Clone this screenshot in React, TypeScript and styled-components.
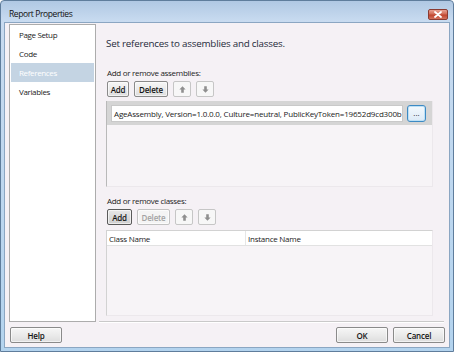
import React from "react";
import styled, { createGlobalStyle, css } from "styled-components";

const GlobalStyle = createGlobalStyle`
  html, body { margin: 0; padding: 0; width: 454px; height: 352px; overflow: hidden; }
  body { font-family: "Open Sans", "Noto Sans", sans-serif; color: #1b1b1b; }
  * { box-sizing: border-box; }
`;

const Window = styled.div`
  width: 454px;
  height: 352px;
  display: flex;
  flex-direction: column;
  border: 1px solid #5f7d9c;
  border-radius: 4px 4px 0 0;
  background: linear-gradient(180deg, #b0c8e3 0px, #c8dbf0 20px, #b3d3ee 100%);
  padding: 0 3px 3px 3px;
`;

const TitleBar = styled.div`
  height: 21px;
  padding: 3px 2px 0 5px;
  display: flex;
  align-items: center;
  justify-content: space-between;
`;

const Title = styled.span`
  font-size: 8.5px;
  color: #111;
  letter-spacing: -0.4px;
`;

const CloseButton = styled.div`
  width: 20px;
  height: 11px;
  margin-top: 2px;
  border: 1px solid #8a3b32;
  border-radius: 2px;
  background: linear-gradient(180deg, #e8a293 0%, #d16a55 45%, #c0442e 55%, #d2725d 100%);
  display: flex;
  align-items: center;
  justify-content: center;
`;

const Client = styled.div`
  flex: 1;
  background: #f5f1f5;
  border: 1px solid #8ba6c2;
  display: flex;
  flex-direction: column;
`;

const Body = styled.div`
  display: flex;
  padding: 1px 4px 0 4px;
`;

const Nav = styled.div`
  flex: 0 0 87px;
  width: 87px;
  height: 298px;
  background: #fff;
  border: 1px solid #acacac;
  display: flex;
  flex-direction: column;
  padding: 0 1px;
`;

const NavItem = styled.div<{ $selected?: boolean }>`
  height: 19px;
  display: flex;
  align-items: center;
  padding-left: 8px;
  font-size: 8px;
  letter-spacing: -0.35px;
  color: #1b1b1b;
  ${(p) =>
    p.$selected &&
    css`
      background: #c4d4e3;
      color: #fff;
    `}
`;

const MainCol = styled.div`
  flex: 1;
  min-width: 0;
  margin-left: 3px;
  display: flex;
  flex-direction: column;
`;

const Main = styled.div`
  flex: 1;
  padding: 12px 12px 0 7px;
  display: flex;
  flex-direction: column;
`;

const Heading = styled.div`
  font-size: 9.8px;
  letter-spacing: -0.22px;
  line-height: 16px;
  color: #1e2a3a;
  margin-bottom: 14px;
`;

const Label = styled.div<{ $top?: number }>`
  font-size: 8px;
  letter-spacing: -0.3px;
  line-height: 14px;
  padding-left: 1px;
  margin-top: ${(p) => p.$top ?? 0}px;
  color: #1b1b1b;
`;

const ButtonRow = styled.div`
  display: flex;
  gap: 5px;
  padding-left: 1px;
  margin-top: 1px;
`;

const Btn = styled.button<{ $w?: number; $disabled?: boolean; $strong?: boolean }>`
  width: ${(p) => p.$w ?? 22}px;
  height: 16px;
  padding: 0;
  font-family: inherit;
  font-size: 8px;
  letter-spacing: -0.2px;
  font-weight: 600;
  color: ${(p) => (p.$disabled ? "#a3a3a3" : "#151515")};
  border: 1px solid ${(p) => (p.$disabled ? "#c3c3c3" : p.$strong ? "#5a5a5a" : "#8a8a8a")};
  border-radius: 2px;
  background: ${(p) =>
    p.$disabled
      ? "#f4f4f4"
      : p.$strong
      ? "linear-gradient(180deg, #e8e8e8 0%, #dadada 50%, #cfcfcf 100%)"
      : "linear-gradient(180deg, #f6f6f6 0%, #ebebeb 50%, #dddddd 100%)"};
  display: flex;
  align-items: center;
  justify-content: center;
  box-shadow: inset 0 0 0 1px rgba(255, 255, 255, 0.6);
`;

const ArrowBtn = styled.div`
  width: 18px;
  height: 16px;
  border: 1px solid #c6c6c6;
  border-radius: 2px;
  background: #f7f7f7;
  display: flex;
  align-items: center;
  justify-content: center;
`;

const AssemblyList = styled.div`
  margin-top: 4px;
  height: 86px;
  border-left: 1px solid #b9b9b9;
  border-right: 1px solid #ece8ec;
  border-bottom: 1px solid #ece8ec;
  background: #f7f4f7;
  display: flex;
  flex-direction: column;
`;

const AssemblyRow = styled.div`
  height: 24px;
  background: #d5d5d5;
  display: flex;
  align-items: center;
  padding: 0 6px 0 4px;
  gap: 4px;
`;

const Field = styled.div`
  flex: 1;
  min-width: 0;
  height: 17px;
  background: #fff;
  border: 1px solid #c9c9c9;
  font-size: 8px;
  display: flex;
  align-items: center;
  padding-left: 2px;
  white-space: nowrap;
  overflow: hidden;
  letter-spacing: -0.18px;
`;

const BrowseBtn = styled.div`
  flex: 0 0 19px;
  height: 17px;
  border: 1px solid #3d8ac4;
  border-radius: 3px;
  background: linear-gradient(180deg, #f4f9fd 0%, #dceaf6 100%);
  box-shadow: inset 0 0 0 1px #bde0f6;
  font-size: 8px;
  display: flex;
  align-items: center;
  justify-content: center;
  padding-bottom: 2px;
`;

const Grid = styled.div`
  margin-top: 5px;
  height: 86px;
  border: 1px solid #d2d2d2;
  border-bottom-color: #ece8ec;
  border-right-color: #ece8ec;
  background: #f7f4f7;
  display: flex;
  flex-direction: column;
`;

const GridHeader = styled.div`
  height: 15px;
  background: #fff;
  border-bottom: 1px solid #e2e2e2;
  display: grid;
  grid-template-columns: 138px 1fr;
`;

const HeaderCell = styled.div`
  font-size: 8px;
  letter-spacing: -0.25px;
  padding-left: 2px;
  display: flex;
  align-items: center;
  & + & {
    border-left: 1px solid #e6e6e6;
  }
`;

const Separator = styled.div`
  height: 1px;
  background: #c9c9c9;
  margin: 0 1px 0 0;
  box-shadow: 0 1px 0 #fff;
`;

const Footer = styled.div`
  flex: 1;
  display: flex;
  align-items: flex-start;
  justify-content: space-between;
  padding: 5px 4px 0 5px;
`;

const FooterGroup = styled.div`
  display: flex;
  gap: 5px;
`;

const Arrow = ({ down }: { down?: boolean }) => (
  <svg width="7" height="7" viewBox="0 0 7 7" style={down ? { transform: "rotate(180deg)" } : undefined}>
    <path d="M3.5 0.3 L6.6 3.6 H4.8 V6.7 H2.2 V3.6 H0.4 Z" fill="#8f8f8f" />
  </svg>
);

const CloseX = () => (
  <svg width="8" height="7" viewBox="0 0 8 7">
    <path d="M1 1 L7 6 M7 1 L1 6" stroke="#fff" strokeWidth="1.8" strokeLinecap="round" />
  </svg>
);

const navItems = ["Page Setup", "Code", "References", "Variables"];

export default function App() {
  return (
    <>
      <GlobalStyle />
      <Window>
        <TitleBar>
          <Title>Report Properties</Title>
          <CloseButton>
            <CloseX />
          </CloseButton>
        </TitleBar>
        <Client>
          <Body>
            <Nav>
              {navItems.map((n) => (
                <NavItem key={n} $selected={n === "References"}>
                  {n}
                </NavItem>
              ))}
            </Nav>
            <MainCol>
              <Main>
                <Heading>Set references to assemblies and classes.</Heading>
                <Label>Add or remove assemblies:</Label>
                <ButtonRow>
                  <Btn $w={22}>Add</Btn>
                  <Btn $w={34}>Delete</Btn>
                  <ArrowBtn>
                    <Arrow />
                  </ArrowBtn>
                  <ArrowBtn>
                    <Arrow down />
                  </ArrowBtn>
                </ButtonRow>
                <AssemblyList>
                  <AssemblyRow>
                    <Field>AgeAssembly, Version=1.0.0.0, Culture=neutral, PublicKeyToken=19652d9cd300b</Field>
                    <BrowseBtn>...</BrowseBtn>
                  </AssemblyRow>
                </AssemblyList>
                <Label $top={7}>Add or remove classes:</Label>
                <ButtonRow>
                  <Btn $w={25} $strong>Add</Btn>
                  <Btn $w={33} $disabled>Delete</Btn>
                  <ArrowBtn>
                    <Arrow />
                  </ArrowBtn>
                  <ArrowBtn>
                    <Arrow down />
                  </ArrowBtn>
                </ButtonRow>
                <Grid>
                  <GridHeader>
                    <HeaderCell>Class Name</HeaderCell>
                    <HeaderCell>Instance Name</HeaderCell>
                  </GridHeader>
                </Grid>
              </Main>
              <Separator />
            </MainCol>
          </Body>
          <Footer>
            <Btn $w={52}>Help</Btn>
            <FooterGroup>
              <Btn $w={52}>OK</Btn>
              <Btn $w={52}>Cancel</Btn>
            </FooterGroup>
          </Footer>
        </Client>
      </Window>
    </>
  );
}
